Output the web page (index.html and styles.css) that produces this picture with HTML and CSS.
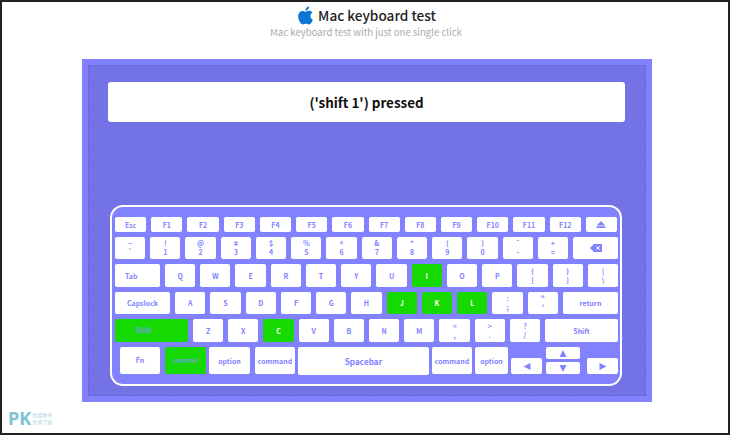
FILE: index.html
```html
<!DOCTYPE html>
<html lang="en">
<head>
  <meta charset="UTF-8">
  <title>Mac keyboard test</title>
  <link rel="stylesheet" href="styles.css">
</head>
<body>
  <div class="frame">
    <header class="top">
      <h1 class="title">
        <svg class="apple" viewBox="2 0 20 24"><path d="M12.152 6.896c-.948 0-2.415-1.078-3.96-1.04-2.04.027-3.91 1.183-4.961 3.014-2.117 3.675-.546 9.103 1.519 12.09 1.013 1.454 2.208 3.09 3.792 3.039 1.52-.065 2.09-.987 3.935-.987 1.831 0 2.35.987 3.96.948 1.637-.026 2.676-1.48 3.676-2.948 1.156-1.688 1.636-3.325 1.662-3.415-.039-.013-3.182-1.221-3.22-4.857-.026-3.04 2.48-4.494 2.597-4.559-1.429-2.09-3.623-2.324-4.39-2.376-2-.156-3.675 1.09-4.61 1.09zM15.53 3.83c.843-1.012 1.4-2.427 1.245-3.83-1.207.052-2.662.805-3.532 1.818-.78.896-1.454 2.338-1.273 3.714 1.338.104 2.715-.688 3.559-1.701"/></svg>
        Mac keyboard test
      </h1>
      <p class="subtitle">Mac keyboard test with just one single click</p>
    </header>

    <div class="stage">
      <div class="inner">
        <div class="result">('shift 1') pressed</div>

        <div class="keyboard">
          <div class="row row-f">
            <div class="key">Esc</div>
            <div class="key">F1</div>
            <div class="key">F2</div>
            <div class="key">F3</div>
            <div class="key">F4</div>
            <div class="key">F5</div>
            <div class="key">F6</div>
            <div class="key">F7</div>
            <div class="key">F8</div>
            <div class="key">F9</div>
            <div class="key">F10</div>
            <div class="key">F11</div>
            <div class="key">F12</div>
            <div class="key"><svg class="ico-eject" viewBox="0 0 10 8"><path d="M5 0l5 5H0zM0 6h10v2H0z"/></svg></div>
          </div>

          <div class="row">
            <div class="key two"><span>~</span><span>`</span></div>
            <div class="key two"><span>!</span><span>1</span></div>
            <div class="key two"><span>@</span><span>2</span></div>
            <div class="key two"><span>#</span><span>3</span></div>
            <div class="key two"><span>$</span><span>4</span></div>
            <div class="key two"><span>%</span><span>5</span></div>
            <div class="key two"><span>^</span><span>6</span></div>
            <div class="key two"><span>&amp;</span><span>7</span></div>
            <div class="key two"><span>*</span><span>8</span></div>
            <div class="key two"><span>(</span><span>9</span></div>
            <div class="key two"><span>)</span><span>0</span></div>
            <div class="key two"><span>&macr;</span><span>-</span></div>
            <div class="key two"><span>+</span><span>=</span></div>
            <div class="key w45"><svg class="ico-del" viewBox="0 0 12 8"><path d="M4 0h8v8H4L0 4z"/><path class="del-x" d="M6.2 2.2l3.6 3.6M9.8 2.2L6.2 5.8"/></svg></div>
          </div>

          <div class="row row-tall">
            <div class="key w45 tab">Tab</div>
            <div class="key">Q</div>
            <div class="key">W</div>
            <div class="key">E</div>
            <div class="key">R</div>
            <div class="key">T</div>
            <div class="key">Y</div>
            <div class="key">U</div>
            <div class="key on">I</div>
            <div class="key">O</div>
            <div class="key">P</div>
            <div class="key two"><span>{</span><span>[</span></div>
            <div class="key two"><span>}</span><span>]</span></div>
            <div class="key two"><span>|</span><span>\</span></div>
          </div>

          <div class="row">
            <div class="key w55">Capslock</div>
            <div class="key">A</div>
            <div class="key">S</div>
            <div class="key">D</div>
            <div class="key">F</div>
            <div class="key">G</div>
            <div class="key">H</div>
            <div class="key on">J</div>
            <div class="key on">K</div>
            <div class="key on">L</div>
            <div class="key two"><span>:</span><span>;</span></div>
            <div class="key two"><span>"</span><span>'</span></div>
            <div class="key w55">return</div>
          </div>

          <div class="row row-tall">
            <div class="key w73 shift-l on-dim">Shift</div>
            <div class="key">Z</div>
            <div class="key">X</div>
            <div class="key on">C</div>
            <div class="key">V</div>
            <div class="key">B</div>
            <div class="key">N</div>
            <div class="key">M</div>
            <div class="key two"><span>&lt;</span><span>,</span></div>
            <div class="key two"><span>&gt;</span><span>.</span></div>
            <div class="key two"><span>?</span><span>/</span></div>
            <div class="key w73">Shift</div>
          </div>

          <div class="row row-last">
            <div class="key fn">Fn</div>
            <div class="key ctrl on-dim">control</div>
            <div class="key opt">option</div>
            <div class="key cmd">command</div>
            <div class="key space">Spacebar</div>
            <div class="key cmd2">command</div>
            <div class="key opt2">option</div>
            <div class="key arrow side"><svg class="ico-arrow" viewBox="0 0 8 8"><path d="M0 4l8-4v8z"/></svg></div>
            <div class="updown">
              <div class="key arrow"><svg class="ico-arrow" viewBox="0 0 8 8"><path d="M4 0l4 8H0z"/></svg></div>
              <div class="key arrow"><svg class="ico-arrow" viewBox="0 0 8 8"><path d="M4 8L0 0h8z"/></svg></div>
            </div>
            <div class="key arrow side right"><svg class="ico-arrow" viewBox="0 0 8 8"><path d="M8 4L0 8V0z"/></svg></div>
          </div>
        </div>
      </div>
    </div>

    <div class="mark"><b>PK</b><span>軟體教學<br>免費下載</span></div>
  </div>
</body>
</html>
```

FILE: styles.css
```css
html, body {
  margin: 0;
  padding: 0;
}
body {
  font-family: "Noto Sans CJK TC", "Noto Sans", sans-serif;
  background-color: white;
}
.frame {
  position: relative;
  box-sizing: border-box;
  width: 730px;
  height: 435px;
  border: 2px solid #222;
  overflow: hidden;
}

/* header */
.top {
  height: 57px;
  text-align: center;
  padding-left: 2px;
}
.title {
  display: flex;
  justify-content: center;
  align-items: center;
  gap: 5px;
  margin: 0;
  padding-top: 3px;
  padding-left: 2px;
  height: 20px;
  font-size: 13.6px;
  font-weight: 500;
  color: #222;
}
.apple {
  width: 15px;
  height: 19px;
  fill: #0a78d2;
}
.subtitle {
  margin: 0;
  font-size: 9.6px;
  line-height: 14px;
  color: #aaa;
}

/* purple area */
.stage {
  box-sizing: border-box;
  width: 570px;
  height: 343px;
  margin-left: 80px;
  padding: 6px;
  background-color: #8282ff;
}
.inner {
  box-sizing: border-box;
  height: 331px;
  padding: 16px 20px 0 19px;
  border: 1px dashed #6464d2;
  background-color: #7373e6;
}
.result {
  height: 40px;
  line-height: 41px;
  background-color: white;
  border-radius: 3px;
  text-align: center;
  font-size: 13.4px;
  font-weight: 700;
  color: #111;
}

/* keyboard */
.keyboard {
  box-sizing: border-box;
  width: 512px;
  height: 181px;
  margin: 83px 0 0 2px;
  padding: 10px 2px 0 3px;
  border: 2px solid white;
  border-radius: 13px;
  background-color: #8282ff;
  display: flex;
  flex-direction: column;
  gap: 5px;
}
.row {
  display: flex;
  gap: 5px;
  height: 22px;
}
.row-f {
  height: 15px;
  margin-right: 1px;
}
.row-tall {
  height: 23px;
}
.key {
  flex: 1;
  min-width: 0;
  display: flex;
  align-items: center;
  justify-content: center;
  background-color: white;
  border-radius: 2px;
  color: #8282ff;
  font-size: 7px;
  font-weight: 700;
  white-space: nowrap;
}
.two {
  flex-direction: column;
  line-height: 9px;
}
.w45 {
  flex: 0 0 45px;
}
.w55 {
  flex: 0 0 55px;
}
.w73 {
  flex: 0 0 73px;
}
.tab {
  justify-content: flex-start;
  padding-left: 10px;
  box-sizing: border-box;
}
.shift-l {
  padding-right: 16px;
  box-sizing: border-box;
  padding-bottom: 2px;
}
.on {
  background-color: #15d900;
  color: white;
}
.on-dim {
  background-color: #15d900;
  color: #6f9fe0;
}

/* bottom row */
.row-last {
  height: 28px;
  gap: 0;
}
.row-last .key {
  flex: none;
  height: 27px;
}
.fn {
  width: 40px;
  margin-left: 5px;
  padding-bottom: 2px;
  box-sizing: border-box;
}
.ctrl {
  width: 41px;
  margin-left: 5px;
  padding-bottom: 2px;
  box-sizing: border-box;
}
.opt {
  width: 41px;
  margin-left: 3px;
}
.cmd {
  width: 40px;
  margin-left: 5px;
}
.row-last .space {
  width: 131px;
  height: 28px;
  margin-left: 3px;
  font-size: 8.2px;
}
.cmd2 {
  width: 40px;
  margin-left: 3px;
}
.opt2 {
  width: 33px;
  margin-left: 3px;
}
.row-last .side {
  width: 31px;
  height: 16px;
  margin: 11px 0 0 3px;
}
.row-last .right {
  margin-left: 7px;
}
.updown {
  display: flex;
  flex-direction: column;
  gap: 3px;
  margin-left: 4px;
}
.updown .key.arrow {
  width: 34px;
  height: 12px;
}
.ico-arrow {
  width: 8px;
  height: 7px;
  fill: #8282ff;
}
.ico-eject {
  width: 10px;
  height: 7px;
  fill: #8282ff;
}
.ico-del {
  width: 12px;
  height: 8px;
  fill: #8282ff;
}
.del-x {
  fill: none;
  stroke: white;
  stroke-width: 1;
}

/* watermark */
.mark {
  position: absolute;
  left: 6px;
  bottom: 5px;
  display: flex;
  align-items: center;
  gap: 1px;
  color: #7cc3d8;
}
.mark b {
  font-family: "Noto Sans", sans-serif;
  font-size: 18px;
  line-height: 20px;
}
.mark span {
  font-size: 5px;
  line-height: 7px;
  color: #b5dbe6;
}
```
